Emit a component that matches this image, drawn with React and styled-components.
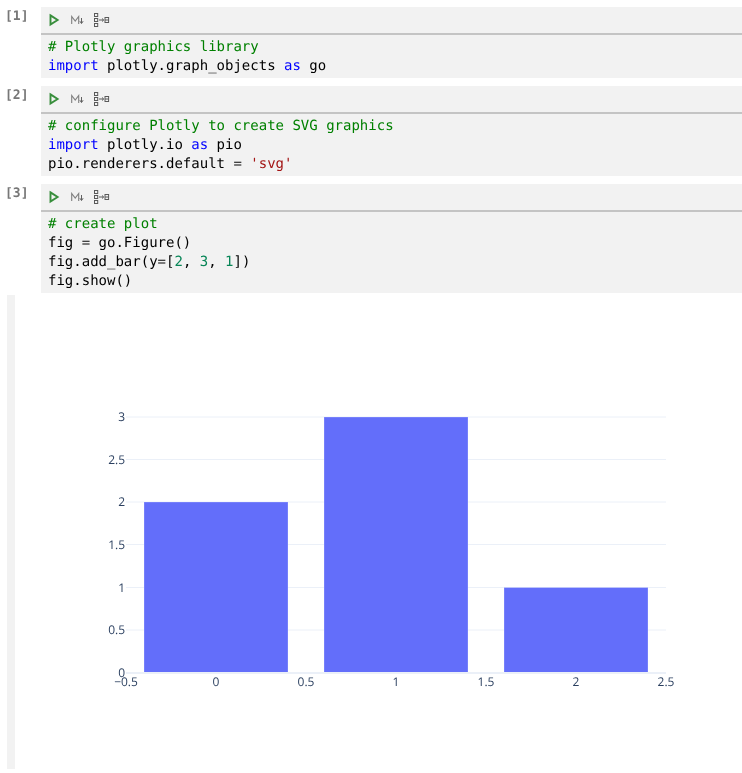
import React from "react";
import styled, { createGlobalStyle } from "styled-components";

const GlobalStyle = createGlobalStyle`
  html, body {
    margin: 0;
    padding: 0;
    background: #ffffff;
    overflow: hidden;
  }
`;

// own layer, so text is drawn with greyscale smoothing as in the webview
const Page = styled.div`
  width: 742px;
  height: 773px;
  padding-top: 7px;
  box-sizing: border-box;
  display: flex;
  flex-direction: column;
  will-change: transform;
  text-rendering: geometricPrecision;
`;

const Cell = styled.div`
  display: flex;
  margin-bottom: 8px;
`;

const Prompt = styled.div`
  width: 41px;
  flex: none;
  box-sizing: border-box;
  padding: 1px 0 0 5px;
  font-family: "DejaVu Sans Mono", monospace;
  font-weight: bold;
  font-size: 13px;
  line-height: 18px;
  color: #777777;
`;

const CellBody = styled.div`
  flex: 1;
  background: #f2f2f2;
`;

const Toolbar = styled.div`
  height: 28px;
  box-sizing: border-box;
  border-bottom: 2px solid #c4c4c4;
  padding: 0 0 0 8px;
  display: flex;
  align-items: center;
  gap: 10px;
`;

const Code = styled.pre`
  margin: 0;
  padding: 3px 7px 2px;
  font-family: "DejaVu Sans Mono", monospace;
  font-size: 14px;
  line-height: 19px;
  color: #000000;
`;

const Comment = styled.span`
  color: #008000;
`;
const Keyword = styled.span`
  color: #0000ff;
`;
const Str = styled.span`
  color: #a31515;
`;
const Num = styled.span`
  color: #098658;
`;

const Output = styled.div`
  margin: -6px 0 0 7px;
  display: flex;
  height: 474px;
`;

const OutputBar = styled.div`
  width: 8px;
  flex: none;
  background: #f2f2f2;
`;

const PlotSvg = styled.svg`
  display: block;
  flex: none;
  text {
    font-family: "Open Sans", sans-serif;
    font-size: 12px;
    fill: #2a3f5f;
  }
`;

const RunIcon = () => (
  <svg width="12" height="14" viewBox="0 0 12 14" fill="none">
    <path d="M1.5 2.4 L8.6 7 L1.5 11.6 Z" stroke="#388e3c" strokeWidth="1.9" strokeLinejoin="miter" />
  </svg>
);

const MarkdownIcon = () => (
  <svg width="13" height="10" viewBox="0 0 13 10" fill="none">
    <path d="M0.7 9 V1.5 L4.2 6 L7.7 1.5 V9" stroke="#808080" strokeWidth="1.1" />
    <path d="M10.5 3 V8 M8.9 6.2 L10.5 8.6 L12.1 6.2" stroke="#616161" strokeWidth="1" />
  </svg>
);

const SplitIcon = () => (
  <svg width="16" height="14" viewBox="0 0 16 14" fill="none" stroke="#5a5a5a" strokeWidth="1">
    <rect x="0.5" y="0.5" width="3.2" height="3" />
    <rect x="0.5" y="5.5" width="3.2" height="3" />
    <rect x="0.5" y="10.5" width="3.2" height="3" />
    <path d="M5 7 H9.5 M8 5.5 L9.7 7 L8 8.5" />
    <rect x="11" y="4.5" width="3.6" height="5" />
    <path d="M11 7 H14.6" />
  </svg>
);

const CellToolbar = () => (
  <Toolbar>
    <RunIcon />
    <MarkdownIcon />
    <SplitIcon />
  </Toolbar>
);

const yGrid = [
  { y: 417, label: "3" },
  { y: 459.5, label: "2.5" },
  { y: 502, label: "2" },
  { y: 544.5, label: "1.5" },
  { y: 587.5, label: "1" },
  { y: 630, label: "0.5" },
];

const xTicks = [
  { x: 126, label: "\u22120.5" },
  { x: 216, label: "0" },
  { x: 306, label: "0.5" },
  { x: 396, label: "1" },
  { x: 486, label: "1.5" },
  { x: 576, label: "2" },
  { x: 666, label: "2.5" },
];

const bars = [
  { x: 144, w: 144, top: 502 },
  { x: 324, w: 144, top: 417 },
  { x: 504, w: 144, top: 587.5 },
];

// svg coords follow the page, shifted by where the output area starts
const Plot = () => (
  <PlotSvg width="727" height="474" viewBox="15 295 727 474">
    {yGrid.map((g) => (
      <g key={g.label}>
        <line x1="126" x2="666" y1={g.y} y2={g.y} stroke="#ebf0f8" strokeWidth="1" />
        <text x="125" y={g.y + 4} textAnchor="end">{g.label}</text>
      </g>
    ))}
    {bars.map((b) => (
      <rect
        key={b.x}
        x={b.x}
        y={b.top}
        width={b.w}
        height={672.5 - b.top}
        fill="#636efa"
        stroke="#ffffff"
        strokeOpacity="0.25"
        strokeWidth="1"
      />
    ))}
    <line x1="126" x2="666" y1="673" y2="673" stroke="#ebf0f8" strokeWidth="2" />
    <text x="125" y="677" textAnchor="end">0</text>
    {xTicks.map((t) => (
      <text key={t.label} x={t.x} y="686" textAnchor="middle">{t.label}</text>
    ))}
  </PlotSvg>
);

export default function App() {
  return (
    <Page>
      <GlobalStyle />
      <Cell>
        <Prompt>[1]</Prompt>
        <CellBody>
          <CellToolbar />
          <Code>
            <Comment># Plotly graphics library</Comment>
            {"\n"}
            <Keyword>import</Keyword> plotly.graph_objects <Keyword>as</Keyword> go
          </Code>
        </CellBody>
      </Cell>
      <Cell>
        <Prompt>[2]</Prompt>
        <CellBody>
          <CellToolbar />
          <Code>
            <Comment># configure Plotly to create SVG graphics</Comment>
            {"\n"}
            <Keyword>import</Keyword> plotly.io <Keyword>as</Keyword> pio
            {"\n"}
            pio.renderers.default = <Str>'svg'</Str>
          </Code>
        </CellBody>
      </Cell>
      <Cell>
        <Prompt>[3]</Prompt>
        <CellBody>
          <CellToolbar />
          <Code>
            <Comment># create plot</Comment>
            {"\n"}
            fig = go.Figure()
            {"\n"}
            fig.add_bar(y=[<Num>2</Num>, <Num>3</Num>, <Num>1</Num>])
            {"\n"}
            fig.show()
          </Code>
        </CellBody>
      </Cell>
      <Output>
        <OutputBar />
        <Plot />
      </Output>
    </Page>
  );
}
